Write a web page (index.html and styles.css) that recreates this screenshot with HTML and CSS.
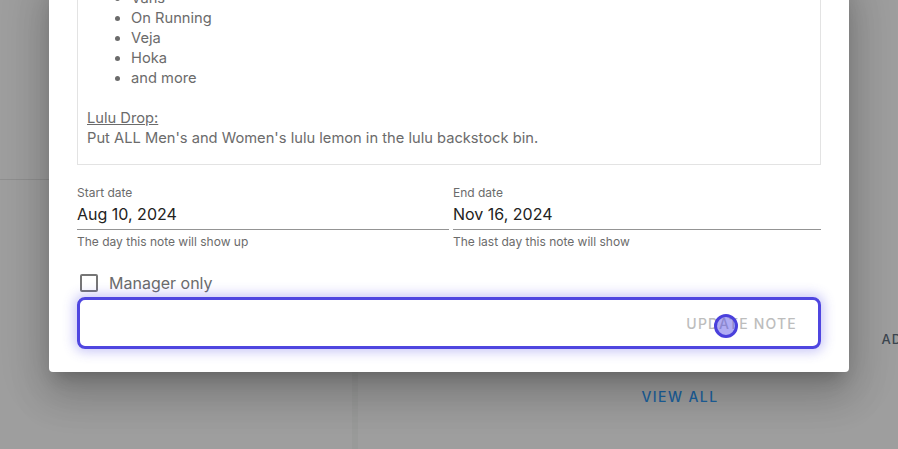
FILE: index.html
```html
<!DOCTYPE html>
<html lang="en">
<head>
<meta charset="utf-8">
<title>Update note</title>
<link rel="stylesheet" href="styles.css">
</head>
<body>
<div class="page">
  <div class="col col-left">
    <div class="card-top"></div>
    <div class="card-rest"></div>
  </div>
  <div class="col col-right">
    <div class="card-actions"><span class="add-btn">ADD</span></div>
    <div class="card-footer"><span class="view-all">VIEW ALL</span></div>
  </div>
</div>

<div class="modal">
  <div class="note-box">
    <ul class="brand-list">
      <li>Vans</li>
      <li>On Running</li>
      <li>Veja</li>
      <li>Hoka</li>
      <li>and more</li>
    </ul>
    <p class="spacer">&nbsp;</p>
    <p class="note-title">Lulu Drop:</p>
    <p class="note-text">Put ALL Men's and Women's lulu lemon in the lulu backstock bin.</p>
  </div>

  <div class="dates">
    <div class="field">
      <label class="field-label">Start date</label>
      <div class="field-input">Aug 10, 2024</div>
      <div class="field-help">The day this note will show up</div>
    </div>
    <div class="field">
      <label class="field-label">End date</label>
      <div class="field-input">Nov 16, 2024</div>
      <div class="field-help">The last day this note will show</div>
    </div>
  </div>

  <div class="check-row">
    <span class="checkbox"></span>
    <span class="check-label">Manager only</span>
  </div>

  <div class="submit">
    <span class="submit-text">UPDATE NOTE</span>
    <span class="click-dot"></span>
  </div>
</div>
</body>
</html>
```

FILE: styles.css
```css
* { box-sizing: border-box; }
html, body {
  margin: 0;
  padding: 0;
  width: 898px;
  height: 449px;
  overflow: hidden;
}
body {
  font-family: Inter, "Noto Sans", sans-serif;
  background: #9b9b9b;
  position: relative;
}

/* dimmed page behind the dialog */
.page {
  display: flex;
  gap: 6px;
  width: 898px;
  height: 449px;
  overflow: hidden;
  background: #999a99;
}
.col {
  background: #9e9e9e;
  display: flex;
  flex-direction: column;
  flex: none;
}
.col-left { width: 352px; }
.col-right { width: 644px; }
.card-top {
  height: 180px;
  border-bottom: 1px solid #8f8f8f;
}
.card-actions {
  height: 380px;
  display: flex;
  justify-content: flex-end;
  align-items: flex-start;
  padding-top: 332px;
}
.add-btn {
  margin-right: 89px;
  font-size: 13px;
  font-weight: 500;
  letter-spacing: 1.2px;
  color: #3c4650;
  line-height: 14px;
}
.card-footer {
  display: flex;
  justify-content: center;
  margin-top: 9px;
}
.view-all {
  font-size: 14px;
  font-weight: 500;
  letter-spacing: 1.4px;
  color: #1c63a0;
  line-height: 16px;
}

/* dialog */
.modal {
  position: absolute;
  left: 49px;
  bottom: 77px;
  width: 800px;
  background: #fff;
  border-radius: 4px;
  padding: 0 28px 23px 28px;
  box-shadow: 0 11px 15px -7px rgba(0,0,0,0.2),
              0 24px 38px 3px rgba(0,0,0,0.14),
              0 9px 46px 8px rgba(0,0,0,0.12);
}

.note-box {
  border: 1px solid #e3e3e3;
  padding: 10px 9px 16px 9px;
  color: #6b6b6b;
  font-size: 14.7px;
  line-height: 20px;
}
.brand-list {
  margin: 0;
  padding-left: 44px;
}
.note-box p { margin: 0; }
.note-title { text-decoration: underline; }

.dates {
  display: grid;
  grid-template-columns: 372px 1fr;
  gap: 4px;
  margin-top: 20px;
}
.field { display: flex; flex-direction: column; }
.field-label {
  font-size: 12px;
  line-height: 16px;
  color: #6b6b6b;
}
.field-input {
  font-size: 16px;
  line-height: 23px;
  color: #222;
  padding: 2px 0 3px 0;
  border-bottom: 1px solid #949494;
}
.field-help {
  font-size: 12px;
  line-height: 16px;
  color: #6b6b6b;
  margin-top: 4px;
}

.check-row {
  display: flex;
  align-items: center;
  gap: 11px;
  height: 24px;
  margin-top: 21px;
  padding-left: 3px;
}
.checkbox {
  width: 18px;
  height: 18px;
  border: 2px solid #767676;
  border-radius: 2px;
}
.check-label {
  font-size: 16px;
  color: #6b6b6b;
}

.submit {
  position: relative;
  margin-top: 2px;
  height: 52px;
  border: 3px solid #4f46e0;
  border-radius: 8px;
  display: flex;
  align-items: center;
  justify-content: flex-end;
  padding-right: 21px;
  box-shadow: 0 0 12px 3px rgba(80,72,229,0.3);
}
.submit-text {
  font-size: 14px;
  font-weight: 500;
  letter-spacing: 1.2px;
  color: #bdbdbd;
}
.click-dot {
  position: absolute;
  left: 634px;
  top: 14px;
  width: 24px;
  height: 24px;
  border-radius: 50%;
  border: 3px solid #4a40dc;
  background: rgba(80,72,229,0.45);
}
```
